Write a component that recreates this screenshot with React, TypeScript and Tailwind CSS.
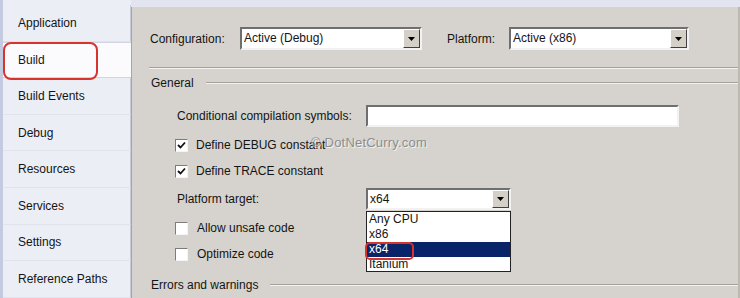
import React from "react";

const tabs = [
  "Application",
  "Build",
  "Build Events",
  "Debug",
  "Resources",
  "Services",
  "Settings",
  "Reference Paths",
];

function Arrow() {
  return (
    <div className="flex h-full w-[17px] items-center justify-center border border-t-white border-l-white border-b-[#404040] border-r-[#404040] bg-[#d4d0c8]">
      <svg width="7" height="4" viewBox="0 0 7 4">
        <path d="M0 0h7L3.5 4z" fill="#000" />
      </svg>
    </div>
  );
}

function Combo({ value, width }: { value: string; width: string }) {
  return (
    <div className={`flex h-[23px] ${width} border-2 border-t-[#6f6f6f] border-l-[#6f6f6f] border-b-[#f2f2f2] border-r-[#f2f2f2] bg-white`}>
      <div className="flex-1 pl-[2px] leading-[19px]">{value}</div>
      <Arrow />
    </div>
  );
}

function CheckBox({ checked }: { checked?: boolean }) {
  return (
    <div className="flex h-[13px] w-[13px] items-center justify-center border border-t-[#7c7c7c] border-l-[#7c7c7c] border-b-[#f4f4f4] border-r-[#f4f4f4] bg-white">
      {checked && (
        <svg width="9" height="9" viewBox="0 0 9 9">
          <path d="M1 4l2.5 2.5L8 1.5" fill="none" stroke="#111" strokeWidth="1.8" />
        </svg>
      )}
    </div>
  );
}

function Separator({ label, className }: { label: string; className: string }) {
  return (
    <div className={`flex h-[16px] items-center pl-[19px] ${className}`}>
      <span>{label}</span>
      <div className="ml-[12px] flex-1 border-t border-b border-t-[#a4a19b] border-b-[#f3f2ef]" />
    </div>
  );
}

export default function App() {
  return (
    <div
      className="flex h-[298px] w-[740px] overflow-hidden bg-[#e2e4f0] text-[12px] text-[#141414]"
      style={{ fontFamily: '"Liberation Sans", Arial, sans-serif' }}
    >
      <div className="w-[131px] shrink-0 border-l-[3px] border-[#c4cbe0] bg-[#eceef6] pt-[5px]">
        {tabs.map((tab) => {
          const selected = tab === "Build";
          return (
            <div
              key={tab}
              className={`relative flex h-[36.6px] items-center pl-[15px] ${
                selected
                  ? "border-t border-b border-[#d3d6e2] bg-[#fbfbfd]"
                  : "border-r border-r-[#c9ccd8] border-b border-b-[#e1e3ec]"
              }`}
            >
              {tab}
              {selected && (
                <div className="absolute left-[0px] top-[-1px] h-[38px] w-[95px] rounded-[8px] border-2 border-[#d8342e]" />
              )}
            </div>
          );
        })}
      </div>

      <div className="mt-[7px] flex-1 border-l border-r-2 border-l-[#a9a6a0] border-r-[#bcb9b3] bg-[#d6d3ce]">
        <div className="mt-[20px] flex h-[23px] items-center pl-[18px]">
          <span className="w-[90px]">Configuration:</span>
          <Combo value="Active (Debug)" width="w-[182px]" />
          <span className="ml-[25px] w-[62px]">Platform:</span>
          <Combo value="Active (x86)" width="w-[180px]" />
        </div>

        <div className="ml-[17px] mt-[17px] border-t border-b border-t-[#a4a19b] border-b-[#f3f2ef]" />

        <Separator label="General" className="mt-[6px]" />

        <div className="mt-[14px] flex h-[22px] items-center pl-[45px]">
          <span className="w-[189px]">Conditional compilation symbols:</span>
          <div className="h-[22px] w-[313px] border-2 border-t-[#6f6f6f] border-l-[#6f6f6f] border-b-[#f2f2f2] border-r-[#f2f2f2] bg-white" />
        </div>

        <div className="relative mt-[10px] flex h-[16px] items-center gap-[8px] pl-[43px]">
          <CheckBox checked />
          <span>Define DEBUG constant</span>
          <span
            className="absolute left-[179px] top-[-4px] text-[13px] tracking-[0.2px] text-[#8d8d8d]"
            style={{ textShadow: "1px 1px 0 rgba(255,255,255,0.7)" }}
          >
            © DotNetCurry.com
          </span>
        </div>

        <div className="mt-[10px] flex h-[16px] items-center gap-[8px] pl-[43px]">
          <CheckBox checked />
          <span>Define TRACE constant</span>
        </div>

        <div className="mt-[9px] flex h-[22px] items-center pl-[45px]">
          <span className="w-[189px]">Platform target:</span>
          <div className="relative">
            <div className="flex h-[22px] w-[145px] border-2 border-t-[#6f6f6f] border-l-[#6f6f6f] border-b-[#f2f2f2] border-r-[#f2f2f2] bg-white">
              <div className="flex-1 pl-[2px] leading-[18px]">x64</div>
              <Arrow />
            </div>
            <div className="absolute left-0 top-[23px] z-10 w-[145px] border border-[#222] bg-white leading-[15px]">
              <div className="h-[15px] pl-[2px]">Any CPU</div>
              <div className="h-[15px] pl-[2px]">x86</div>
              <div className="h-[15px] bg-[#0a246a] pl-[2px] text-white">x64</div>
              <div className="h-[14px] pl-[2px]">Itanium</div>
              <div className="absolute left-[-2px] top-[30px] h-[18px] w-[49px] rounded-[5px] border-2 border-[#d8342e]" />
            </div>
          </div>
        </div>

        <div className="mt-[10px] flex h-[16px] items-center gap-[9px] pl-[43px]">
          <CheckBox />
          <span>Allow unsafe code</span>
        </div>

        <div className="mt-[10px] flex h-[16px] items-center gap-[9px] pl-[43px]">
          <CheckBox />
          <span>Optimize code</span>
        </div>

        <Separator label="Errors and warnings" className="mt-[15px]" />
      </div>
    </div>
  );
}
